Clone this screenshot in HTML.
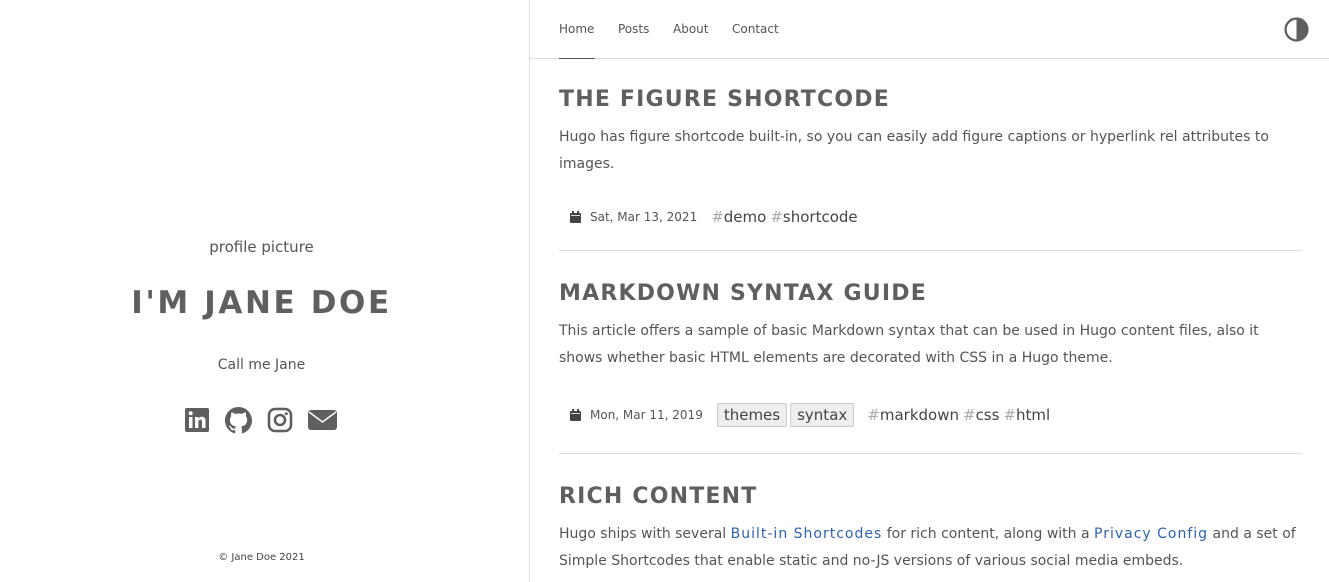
<!DOCTYPE html><html><head><style>
*{margin:0;padding:0;box-sizing:border-box}
body{width:1329px;height:582px;overflow:hidden;font-family:"DejaVu Sans",sans-serif;color:#555;background:#fff;position:relative}
.left{position:absolute;left:0;top:0;width:530px;height:582px;border-right:1px solid #ddd;text-align:center}
.pp{position:absolute;top:238px;width:100%;font-size:15px;color:#555;padding-right:6px}
.name{position:absolute;top:285px;width:100%;font-size:31px;font-weight:bold;letter-spacing:2.6px;color:#5f5f5f;padding-right:6px}
.call{position:absolute;top:357px;width:100%;font-size:14px;padding-right:6px}
.icons{position:absolute;top:407px;left:184px;display:flex;gap:15px}
.copy{position:absolute;top:552px;width:100%;font-size:10px;color:#444;padding-right:6px}
.nav{position:absolute;left:530px;top:0;right:0;height:59px;border-bottom:1px solid #ddd}
.nav a{position:absolute;top:22px;font-size:12px;color:#555;text-decoration:none}
.main{position:absolute;left:559px;top:59px;width:743px}
h2{font-size:22px;font-weight:bold;letter-spacing:1.2px;color:#5f5f5f;margin-top:29px;line-height:26px}
p{font-size:14px;line-height:27px;margin-top:11px;color:#555}
.meta{display:flex;align-items:center;margin-top:25px;padding-left:11px;height:28px;font-size:12px}
.meta .d{margin-left:9px;margin-right:14px}
.tag{font-size:15px;border:1px solid #ccc;background:#eee;border-radius:2px;padding:2px 6px;margin-right:3px;color:#444}
.h{font-size:15px;color:#444;margin-right:4px}.h b{font-weight:normal;color:#aaa}
hr{border:0;border-top:1px solid #ddd;margin-top:19px}
hr.b{margin-top:24px}
a.l{color:#2d62b3;text-decoration:none;letter-spacing:1px}
</style></head><body>
<div class="left">
<div class="pp">profile picture</div>
<div class="name">I'M JANE DOE</div>
<div class="call">Call me Jane</div>
<div class="icons">
<svg width="26" height="26" viewBox="0 0 26 26"><rect x="1" y="1" width="24" height="24" rx="2" fill="#5f5f5f"/><rect x="5" y="10" width="3.5" height="11" fill="#fff"/><circle cx="6.7" cy="6.3" r="2" fill="#fff"/><path d="M11 10h3.3v1.6c.7-1.2 2-1.9 3.6-1.9 2.7 0 3.6 1.7 3.6 4.3V21H18v-6c0-1.4-.3-2.4-1.6-2.4-1.4 0-2 1-2 2.4v6H11z" fill="#fff"/></svg>
<svg width="27" height="27" viewBox="0 0 16 16"><path fill="#5f5f5f" d="M8 0C3.58 0 0 3.58 0 8c0 3.54 2.290 6.53 5.470 7.59.4.07.55-.17.55-.38 0-.19-.01-.82-.01-1.49-2.010.37-2.530-.49-2.690-.94-.09-.23-.48-.94-.82-1.130-.28-.15-.68-.52-.01-.53.63-.01 1.080.58 1.230.82.72 1.210 1.870.87 2.330.66.07-.52.28-.87.51-1.070-1.780-.2-3.640-.89-3.640-3.950 0-.87.31-1.590.82-2.150-.08-.2-.36-1.020.08-2.120 0 0 .67-.21 2.2.82.64-.18 1.320-.27 2-.27.68 0 1.360.09 2 .27 1.530-1.040 2.2-.82 2.2-.82.44 1.1.16 1.920.08 2.120.51.56.82 1.270.82 2.150 0 3.070-1.870 3.750-3.650 3.950.29.25.54.73.54 1.480 0 1.070-.01 1.930-.01 2.2 0 .21.15.46.55.38A8.013 8.013 0 0016 8c0-4.420-3.580-8-8-8z"/></svg>
<svg width="26" height="26" viewBox="0 0 26 26"><rect x="2" y="2" width="22" height="22" rx="6" fill="none" stroke="#5f5f5f" stroke-width="2.6"/><circle cx="13" cy="13" r="5" fill="none" stroke="#5f5f5f" stroke-width="2.6"/><circle cx="19.3" cy="6.7" r="1.5" fill="#5f5f5f"/></svg>
<svg width="29" height="26" viewBox="0 0 29 26"><rect x="0" y="3" width="29" height="20" rx="3" fill="#5f5f5f"/><path d="M1 5l13.5 10L28 5" fill="none" stroke="#fff" stroke-width="1.5"/></svg>
</div>
<div class="copy">© Jane Doe 2021</div>
</div>
<div class="nav">
<a style="left:29px">Home</a><a style="left:88px">Posts</a><a style="left:143px">About</a><a style="left:202px">Contact</a>
<div style="position:absolute;left:29px;top:58px;width:36px;height:1px;background:#555"></div>
<svg style="position:absolute;left:754px;top:17px" width="25" height="25" viewBox="0 0 24 24"><circle cx="12" cy="12" r="10.5" fill="none" stroke="#5f5f5f" stroke-width="2.2"/><path d="M12 1.5a10.5 10.5 0 010 21z" fill="#5f5f5f"/></svg>
</div>
<div class="main">
<h2 style="margin-top:28px">THE FIGURE SHORTCODE</h2>
<p>Hugo has figure shortcode built-in, so you can easily add figure captions or hyperlink rel attributes to images.</p>
<div class="meta"><svg width="11" height="12" viewBox="0 0 11 12"><rect x="0" y="2" width="11" height="10" rx="1" fill="#444"/><rect x="2" y="0" width="2" height="3" fill="#444"/><rect x="7" y="0" width="2" height="3" fill="#444"/><rect x="1" y="4" width="9" height="0.8" fill="#fff"/></svg><span class="d">Sat, Mar 13, 2021</span><span class="h"><b>#</b>demo</span><span class="h"><b>#</b>shortcode</span></div>
<hr>
<h2 style="margin-top:30px">MARKDOWN SYNTAX GUIDE</h2>
<p>This article offers a sample of basic Markdown syntax that can be used in Hugo content files, also it shows whether basic HTML elements are decorated with CSS in a Hugo theme.</p>
<div class="meta" style="margin-top:29px"><svg width="11" height="12" viewBox="0 0 11 12"><rect x="0" y="2" width="11" height="10" rx="1" fill="#444"/><rect x="2" y="0" width="2" height="3" fill="#444"/><rect x="7" y="0" width="2" height="3" fill="#444"/><rect x="1" y="4" width="9" height="0.8" fill="#fff"/></svg><span class="d">Mon, Mar 11, 2019</span><span class="tag">themes</span><span class="tag" style="margin-right:13px">syntax</span><span class="h"><b>#</b>markdown</span><span class="h"><b>#</b>css</span><span class="h"><b>#</b>html</span></div>
<hr class="b">
<h2 style="margin-top:30px">RICH CONTENT</h2>
<p>Hugo ships with several <a class="l">Built-in Shortcodes</a> for rich content, along with a <a class="l">Privacy Config</a> and a set of Simple Shortcodes that enable static and no-JS versions of various social media embeds.</p>
</div>
</body></html>
